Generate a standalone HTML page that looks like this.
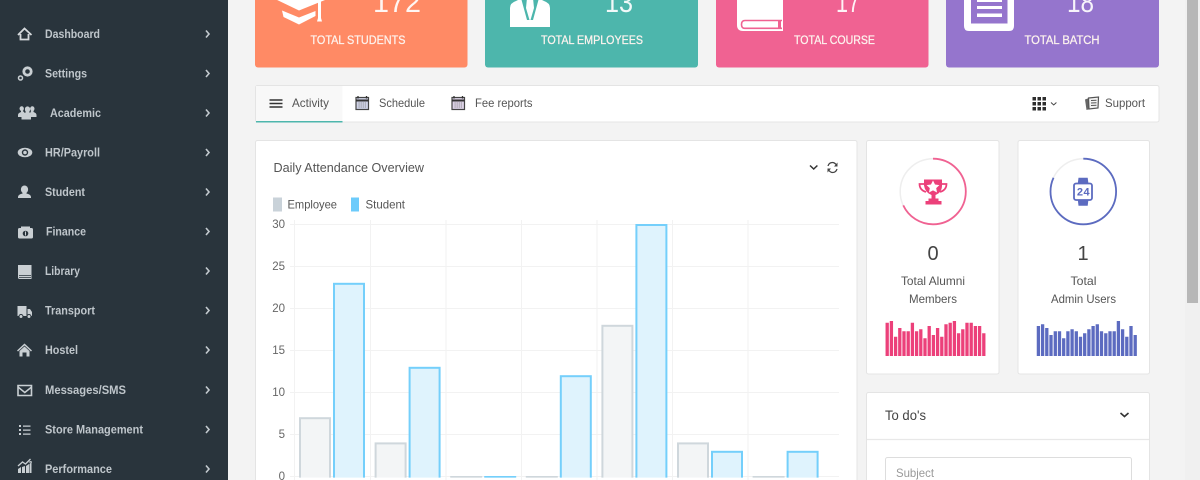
<!DOCTYPE html>
<html><head><meta charset="utf-8"><title>Dashboard</title>
<style>
html,body{margin:0;padding:0;width:1200px;height:480px;overflow:hidden;background:#f3f3f3}
svg{position:absolute;left:0;top:0;display:block}
text{font-family:"Liberation Sans",sans-serif}
.n{font-size:11.5px;font-weight:700;fill:#bfc6cb}
.c{font-size:11.5px;fill:#fdf3ee;stroke:#fdf3ee;stroke-width:.25;text-anchor:start}
.b{font-size:29px;fill:#fff;fill-opacity:.92}
.t{font-size:12px;fill:#555}
.a{font-size:11.5px;fill:#666;text-anchor:end}
.p{font-size:12px;fill:#555}
.box{fill:#fff;stroke:#e4e4e4;stroke-width:1}
</style></head><body>
<svg width="1200" height="480" viewBox="0 0 1200 480" xmlns="http://www.w3.org/2000/svg">
<defs><clipPath id="cb"><rect x="290" y="200" width="560" height="277.600"/></clipPath></defs>
<rect width="1200" height="480" fill="#f3f3f3"/>
<rect width="228" height="480" fill="#29343c"/>
<rect x="1185" width="15" height="480" fill="#f0f0f0"/>
<rect x="1187" y="-2" width="11" height="305" fill="#b7b7b7"/>

<!-- Sidebar text -->
<text class="n" x="45" y="38" textLength="55" lengthAdjust="spacingAndGlyphs">Dashboard</text>
<text class="n" x="45" y="77.500" textLength="42" lengthAdjust="spacingAndGlyphs">Settings</text>
<text class="n" x="50" y="117" textLength="51" lengthAdjust="spacingAndGlyphs">Academic</text>
<text class="n" x="45" y="156.500" textLength="55" lengthAdjust="spacingAndGlyphs">HR/Payroll</text>
<text class="n" x="45" y="196" textLength="40" lengthAdjust="spacingAndGlyphs">Student</text>
<text class="n" x="46" y="235.500" textLength="40" lengthAdjust="spacingAndGlyphs">Finance</text>
<text class="n" x="45" y="275" textLength="35" lengthAdjust="spacingAndGlyphs">Library</text>
<text class="n" x="45" y="314.500" textLength="50" lengthAdjust="spacingAndGlyphs">Transport</text>
<text class="n" x="45" y="354" textLength="33" lengthAdjust="spacingAndGlyphs">Hostel</text>
<text class="n" x="45" y="394" textLength="81" lengthAdjust="spacingAndGlyphs">Messages/SMS</text>
<text class="n" x="45" y="433.500" textLength="98" lengthAdjust="spacingAndGlyphs">Store Management</text>
<text class="n" x="45" y="473" textLength="67" lengthAdjust="spacingAndGlyphs">Performance</text>
<!-- Sidebar chevrons -->
<path d="M206 30.500l3 3.500-3 3.500M206 70l3 3.500-3 3.500M206 109.500l3 3.500-3 3.500M206 149l3 3.500-3 3.500M206 188.500l3 3.500-3 3.500M206 228l3 3.500-3 3.500M206 267.500l3 3.500-3 3.500M206 307l3 3.500-3 3.500M206 346.500l3 3.500-3 3.500M206 386.500l3 3.500-3 3.500M206 426l3 3.500-3 3.500M206 465.500l3 3.500-3 3.500" fill="none" stroke="#c3cacf" stroke-width="1.600"/>
<!-- Sidebar icons -->
<g fill="#c9cfd3">
<path d="M18 35l6.500-6.500L31.500 35M20.500 34v5.500h8V34" fill="none" stroke="#d5d9dc" stroke-width="1.800"/>
<circle cx="27.500" cy="71.500" r="3.700" fill="none" stroke="#c9cfd3" stroke-width="2.800"/><circle cx="20.500" cy="78" r="2" fill="none" stroke="#c9cfd3" stroke-width="1.500"/>
<path d="M18 117v-2q0-2 3-3v-1q-1.500-1-1.500-2.500a2.200 2.200 0 0 1 4.400 0q0 1.500-1 2.500l2 2q1-1 1-1-1-1-1-3a2.600 2.600 0 0 1 5.200 0q0 2-1 3l1 1 1-2q-1-1-1-2.500a2.200 2.200 0 0 1 4.400 0q0 1.500-1 2.500v1q3 1 3 3v2h-5.500v2.500H21.500V117z"/>
<ellipse cx="25" cy="152.500" rx="7.300" ry="4.700"/><circle cx="25" cy="152.500" r="3.200" fill="#29343c"/><circle cx="25" cy="152.500" r="1.800"/>
<ellipse cx="24.500" cy="189.500" rx="3.600" ry="4"/><path d="M23 192h3l.5 1.500q4.500 1 4.500 3.500v1H18v-1q0-2.500 4.500-3.500z"/>
<rect x="18" y="228" width="15" height="10.500" rx="1.500"/><path d="M21 226.500h9v2h-9z"/><circle cx="25.500" cy="233.500" r="2.800" fill="#29343c"/><path d="M25 231.500h1v4h-1z"/>
<path d="M18 265h13.500v14H19.500q-1.500 0-1.500-1.500z"/><path d="M19 275.500h12M19 277.500h12" stroke="#29343c" stroke-width=".8"/>
<path d="M17.500 306h9v10h-9zM27.500 309h2.500l2 3v4h-4.500z"/><circle cx="21" cy="316.500" r="2" stroke="#29343c"/><circle cx="29" cy="316.500" r="2" stroke="#29343c"/>
<path d="M17 350.500l7.500-7 7.500 7-1 1-6.500-6-6.500 6z"/><path d="M19.500 351l5-4.500 5 4.500v5.500H26.500v-4h-4v4h-3z"/>
<path d="M18 385.500h13.500v10H18z" fill="none" stroke="#c9cfd3" stroke-width="1.600"/><path d="M18 386l6.800 5.500 6.800-5.500v2l-6.800 5.500-6.800-5.500z"/>
<path d="M19 425h2v2h-2zM19 429h2v2h-2zM19 433h2v2h-2zM23 425.500h7.500v1.200H23zM23 429.500h7.500v1.200H23zM23 433.500h7.500v1.200H23z"/>
<path d="M18 473v-4l3-2v6zM22 473v-6l3-1v7zM26 473v-7l3-2v9zM29.500 473v-9l2-2v11z"/><path d="M18 466l4.500-4 3 2 5-5" fill="none" stroke="#c9cfd3" stroke-width="1.300"/><path d="M28.500 462.500h3.500v-1l-2-.5z"/>
</g>

<!-- Stat cards -->
<rect x="255" y="-10" width="212.500" height="77.500" rx="3" fill="#ff8a65"/>
<rect x="485" y="-10" width="213" height="77.500" rx="3" fill="#4db6ac"/>
<rect x="716" y="-10" width="212.500" height="77.500" rx="3" fill="#f06292"/>
<rect x="946" y="-10" width="213" height="77.500" rx="3" fill="#9575cd"/>
<text class="b" x="373" y="12" textLength="48" lengthAdjust="spacingAndGlyphs">172</text>
<text class="b" x="605" y="12" textLength="28" lengthAdjust="spacingAndGlyphs">13</text>
<text class="b" x="836" y="12" textLength="24" lengthAdjust="spacingAndGlyphs">17</text>
<text class="b" x="1067" y="12" textLength="27" lengthAdjust="spacingAndGlyphs">18</text>
<text class="c" x="310.500" y="44" textLength="95" lengthAdjust="spacingAndGlyphs">TOTAL STUDENTS</text>
<text class="c" x="541" y="44" textLength="102" lengthAdjust="spacingAndGlyphs">TOTAL EMPLOYEES</text>
<text class="c" x="794" y="44" textLength="81" lengthAdjust="spacingAndGlyphs">TOTAL COURSE</text>
<text class="c" x="1024.500" y="44" textLength="75" lengthAdjust="spacingAndGlyphs">TOTAL BATCH</text>
<!-- Card icons -->
<g fill="#fff">
<path d="M273 -2H325V0L299 10.500z"/>
<path d="M282 10.500L299 17.500 315.500 11V16L299 24.500 283.500 17z"/>
<path d="M318 -2h3v20l1 3.500h-5l1-3.500z"/>
<path d="M510 27V8Q510 3 516 1L522 -2H538L544 1Q550 3 550 8V27z"/>
<path d="M737 -5h46v36h-40q-6 0-6-6z"/>
<path d="M964 -5h50v31q0 5-5 5h-40q-5 0-5-5zM971 -5v28.500h36.500v-28.500z" fill-rule="evenodd"/>
<path d="M977 -1h25v3h-25zM977 6h25v3h-25zM977 13.500h25v3.500h-25z"/>
</g>
<path d="M521 -2H527L526 8 529.500 20H527zM539 -2H533L534 8 530.500 20H533z" fill="#4db6ac"/>
<path d="M782 20.500H745Q741.500 20.500 741.500 24.500T745 28.300H782" stroke="#f06292" stroke-width="1.600" fill="none"/>
<path d="M779.500 20.500v8" stroke="#f06292" stroke-width="3"/>

<!-- Tab bar -->
<rect x="255.500" y="85.500" width="903.500" height="36.500" rx="2" class="box"/>
<rect x="256" y="86" width="86.500" height="35" fill="#f8f8f8"/>
<rect x="256" y="121" width="86.500" height="1.500" fill="#4db6ac"/>
<path d="M269.500 100h13M269.500 103.500h13M269.500 107h13" stroke="#333" stroke-width="1.500"/>
<text class="t" x="292" y="107" textLength="37" lengthAdjust="spacingAndGlyphs">Activity</text>
<rect x="356" y="97.500" width="12.500" height="12" fill="#cfd2e6" stroke="#444" stroke-width="1.200"/><path d="M356 100.500h12.500" stroke="#333" stroke-width="2"/><path d="M358 96v2.500M366.500 96v2.500" stroke="#333" stroke-width="1.300"/><path d="M358.500 103h8M358.500 105h8M358.500 107h8" stroke="#777" stroke-width=".8" stroke-dasharray="1.200 .9"/>
<rect x="452" y="97.500" width="12.500" height="12" fill="#dcd2e6" stroke="#444" stroke-width="1.200"/><path d="M452 100.500h12.500" stroke="#333" stroke-width="2"/><path d="M454 96v2.500M462.500 96v2.500" stroke="#333" stroke-width="1.300"/><path d="M454.500 103h8M454.500 105h8M454.500 107h8" stroke="#777" stroke-width=".8" stroke-dasharray="1.200 .9"/>
<text class="t" x="379" y="107" textLength="46" lengthAdjust="spacingAndGlyphs">Schedule</text>
<text class="t" x="475" y="107" textLength="57.500" lengthAdjust="spacingAndGlyphs">Fee reports</text>
<path d="M1032.500 97h3.500v3.500h-3.500zM1037.500 97h3.500v3.500h-3.500zM1042.500 97h3.500v3.500h-3.500zM1032.500 102h3.500v3.500h-3.500zM1037.500 102h3.500v3.500h-3.500zM1042.500 102h3.500v3.500h-3.500zM1032.500 107h3.500v3.500h-3.500zM1037.500 107h3.500v3.500h-3.500zM1042.500 107h3.500v3.500h-3.500z" fill="#2e2e2e"/>
<path d="M1051 102.500l2.700 2.500 2.700-2.500" fill="none" stroke="#444" stroke-width="1"/>
<path d="M1085 99.500l4-1.500 1 11-3.500 1z" fill="#666"/>
<path d="M1088.500 98l10-1-.5 11-9 1z" fill="#f4f4f4" stroke="#555" stroke-width="1.200"/><path d="M1091 100.500l5.500-.3M1091 103l5.500-.3M1091 105.500l5.500-.3" stroke="#555"/>
<text class="t" x="1105" y="107" textLength="40" lengthAdjust="spacingAndGlyphs">Support</text>

<!-- Chart panel -->
<rect x="255.500" y="140.500" width="601.500" height="345" rx="2" class="box"/>
<text x="273.500" y="172" textLength="150.500" lengthAdjust="spacingAndGlyphs" style="font-size:13px;fill:#555">Daily Attendance Overview</text>
<path d="M810 165.500l3.700 3.500 3.700-3.500" fill="none" stroke="#333" stroke-width="1.500"/>
<path d="M836.500 165q-2-2.500-4-2.500-3.500 0-4.500 3.500M828.500 170q2 2.500 4 2.500 3.500 0 4.500-3.500" fill="none" stroke="#444" stroke-width="1.300"/><path d="M837.500 162.500v4h-3.500zM827.500 172.500v-4h3.500z" fill="#444"/>
<rect x="273" y="197.500" width="9" height="14" fill="#c9d2d9"/>
<rect x="351" y="197.500" width="8" height="14" fill="#6ccbfb"/>
<text class="t" x="287.500" y="208.500" textLength="49.500" lengthAdjust="spacingAndGlyphs">Employee</text>
<text class="t" x="365.500" y="208.500" textLength="39.500" lengthAdjust="spacingAndGlyphs">Student</text>
<path d="M290 224.500h549M290 266.500h549M290 308.500h549M290 350.500h549M290 392.500h549M290 434.500h549M290 476.500h549M294.500 220v260M370.500 220v260M446 220v260M521.500 220v260M597 220v260M672.500 220v260M748 220v260" stroke="#f2f2f2" stroke-width="1" fill="none"/>
<text class="a" x="285" y="228">30</text>
<text class="a" x="285" y="270">25</text>
<text class="a" x="285" y="312">20</text>
<text class="a" x="285" y="354">15</text>
<text class="a" x="285" y="396">10</text>
<text class="a" x="285" y="438">5</text>
<text class="a" x="285" y="480">0</text>
<g clip-path="url(#cb)">
<g fill="#f3f5f6" stroke="#cfd7dc" stroke-width="2">
<rect x="300" y="418.200" width="30" height="70"/><rect x="375.600" y="443.400" width="30" height="70"/><rect x="451.200" y="477" width="30" height="70"/><rect x="526.800" y="477" width="30" height="70"/><rect x="602.400" y="325.800" width="30" height="200"/><rect x="678" y="443.400" width="30" height="70"/><rect x="753.600" y="477" width="30" height="70"/>
</g>
<g fill="#dff3fd" stroke="#74cffb" stroke-width="2">
<rect x="334" y="283.800" width="30" height="220"/><rect x="409.600" y="367.800" width="30" height="150"/><rect x="485.200" y="477" width="30" height="70"/><rect x="560.800" y="376.200" width="30" height="150"/><rect x="636.400" y="225" width="30" height="290"/><rect x="712" y="451.800" width="30" height="70"/><rect x="787.600" y="451.800" width="30" height="70"/>
</g>
</g>

<!-- Right cards -->
<rect x="866.500" y="140.500" width="132.500" height="233.500" rx="2" class="box"/>
<rect x="1018" y="140.500" width="131.500" height="233.500" rx="2" class="box"/>
<circle cx="933" cy="191.500" r="32.800" fill="none" stroke="#eeeeee" stroke-width="1.500"/>
<circle cx="1083.300" cy="191.500" r="32.800" fill="none" stroke="#eeeeee" stroke-width="1.500"/>
<circle cx="933" cy="191.500" r="32.800" fill="none" stroke="#f06292" stroke-width="1.800" stroke-dasharray="140 206.100" transform="rotate(-90 933 191.500)"/>
<circle cx="1083.300" cy="191.500" r="32.800" fill="none" stroke="#5c6bc0" stroke-width="1.800" stroke-dasharray="168.500 206.100" transform="rotate(-90 1083.300 191.500)"/>
<!-- Trophy -->
<path d="M924 179.500h18v6q0 7-6.500 9.500v3.500h3v2.500h3v3.500h-16v-3.500h3v-2.500h3v-3.500q-6.500-2.500-7.500-9.500z" fill="#ec407a"/>
<path d="M924 184h-4.500q0 6 6.500 8M942 184h4.500q0 6-6.500 8" fill="none" stroke="#ec407a" stroke-width="1.700"/>
<path d="M933 180.500l2 4 4.400.6-3.200 3 .8 4.400-4-2.100-4 2.100.8-4.400-3.200-3 4.400-.6z" fill="#fff"/>
<!-- Watch -->
<path d="M1077.700 184l.8-6.300h9.200l.8 6.300zM1077.700 199l.8 6.700h9.200l.8-6.700z" fill="#5c6bc0"/>
<rect x="1074" y="183.500" width="18" height="16.500" rx="2" fill="#fff" stroke="#5c6bc0" stroke-width="1.800"/>
<text x="1083.200" y="195.500" text-anchor="middle" style="font-size:11px;font-weight:700;fill:#5c6bc0;font-family:'Liberation Mono',monospace">24</text>
<text x="933" y="260" text-anchor="middle" style="font-size:20px;fill:#444">0</text>
<text x="1083" y="260" text-anchor="middle" style="font-size:20px;fill:#444">1</text>
<text class="p" x="901" y="285" textLength="64" lengthAdjust="spacingAndGlyphs">Total Alumni</text>
<text class="p" x="909" y="303" textLength="48" lengthAdjust="spacingAndGlyphs">Members</text>
<text class="p" x="1070.500" y="285" textLength="26" lengthAdjust="spacingAndGlyphs">Total</text>
<text class="p" x="1051" y="303" textLength="65" lengthAdjust="spacingAndGlyphs">Admin Users</text>
<path fill="none" stroke="#ec407a" stroke-width="3.300" d="M887.200 356V322.700M891.400 356V321M895.600 356V336.700M899.800 356V328M904 356V331.300M908.200 356V331.300M912.400 356V322.700M916.600 356V331.300M920.800 356V329.300M925 356V338.300M929.200 356V326M933.400 356V335M937.600 356V328M941.800 356V336.700M946 356V324.300M950.200 356V322.700M954.400 356V321M958.600 356V333.300M962.800 356V329.300M967 356V322.700M971.200 356V322.700M975.400 356V326M979.600 356V326M983.800 356V333.300"/>
<path fill="none" stroke="#5c6bc0" stroke-width="3.300" d="M1038.400 356V326M1042.600 356V324.300M1046.800 356V328M1051 356V335M1055.300 356V331.300M1059.500 356V331.300M1063.700 356V338.300M1067.900 356V331.300M1072.100 356V329.300M1076.300 356V331.300M1080.500 356V336.700M1084.700 356V333.300M1088.900 356V329.300M1093.100 356V326M1097.300 356V324.300M1101.500 356V331.300M1105.800 356V333.300M1110 356V331.300M1114.200 356V331.300M1118.400 356V321M1122.600 356V329.300M1126.800 356V336.700M1131 356V326M1135.200 356V335"/>

<!-- To do -->
<rect x="866.500" y="392.500" width="283" height="100" rx="2" class="box"/>
<path d="M867 439.500h282" stroke="#e8e8e8" stroke-width="1.200"/>
<text x="885" y="420" textLength="41" lengthAdjust="spacingAndGlyphs" style="font-size:14px;fill:#444">To do's</text>
<path d="M1120.500 413l4 3.500 4-3.500" fill="none" stroke="#333" stroke-width="1.600"/>
<rect x="885.500" y="457.500" width="246" height="40" rx="2" fill="#fff" stroke="#ddd"/>
<text x="896" y="477" textLength="38" lengthAdjust="spacingAndGlyphs" style="font-size:12px;fill:#9a9a9a">Subject</text>
</svg>
</body></html>
